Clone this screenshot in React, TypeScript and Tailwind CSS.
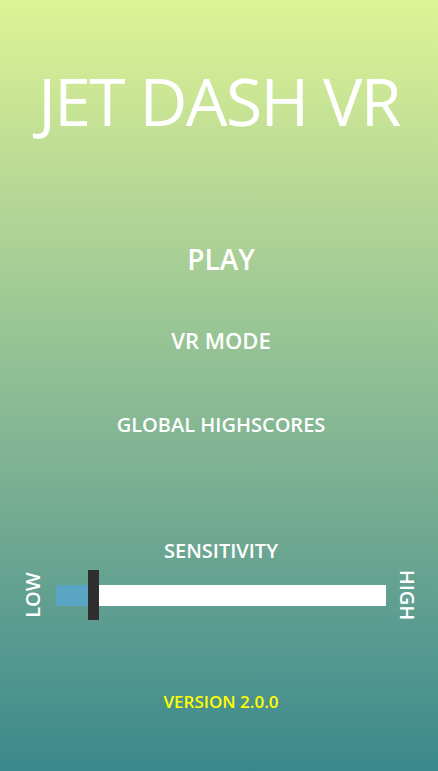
import React from 'react';

const MenuButton = ({ label, size }: { label: string; size: string }) => (
  <button className={`text-white font-semibold leading-none ${size}`}>{label}</button>
);

export default function App() {
  return (
    <div
      className="h-[771px] w-full overflow-hidden bg-gradient-to-b from-[#def394] to-[#3a888c] flex flex-col items-center text-white"
      style={{ fontFamily: '"Open Sans", "Noto Sans", sans-serif' }}
    >
      <h1 className="mt-[67px] text-[66px] leading-none font-normal tracking-tight">JET DASH VR</h1>

      <div className="mt-[112px] pl-[4px] flex flex-col items-center">
        <MenuButton label="PLAY" size="text-[28px]" />
        <div className="mt-[56px]">
          <MenuButton label="VR MODE" size="text-[22px]" />
        </div>
        <div className="mt-[59px]">
          <MenuButton label="GLOBAL HIGHSCORES" size="text-[20px]" />
        </div>
      </div>

      <div className="mt-[103px] w-full flex flex-col items-center">
        <div className="pl-[4px] text-[20px] font-semibold leading-none">SENSITIVITY</div>
        <div className="mt-[9px] w-full flex items-center justify-between pl-[24px] pr-[22px]">
          <span className="-rotate-90 text-[20px] font-semibold leading-none w-[18px] whitespace-nowrap flex justify-center">LOW</span>
          <div className="flex-1 ml-[14px] mr-[12px] h-[50px] flex items-center">
            <div className="w-[32px] h-[21px] bg-[#5aa5c4]" />
            <div className="w-[11px] h-[50px] bg-[#2e2e2e]" />
            <div className="flex-1 h-[21px] bg-white" />
          </div>
          <span className="rotate-90 text-[20px] font-semibold leading-none w-[18px] whitespace-nowrap flex justify-center">HIGH</span>
        </div>
      </div>

      <div className="mt-[73px] pl-[4px] text-[17px] font-semibold leading-none text-[#ffff00]">VERSION 2.0.0</div>
    </div>
  );
}
